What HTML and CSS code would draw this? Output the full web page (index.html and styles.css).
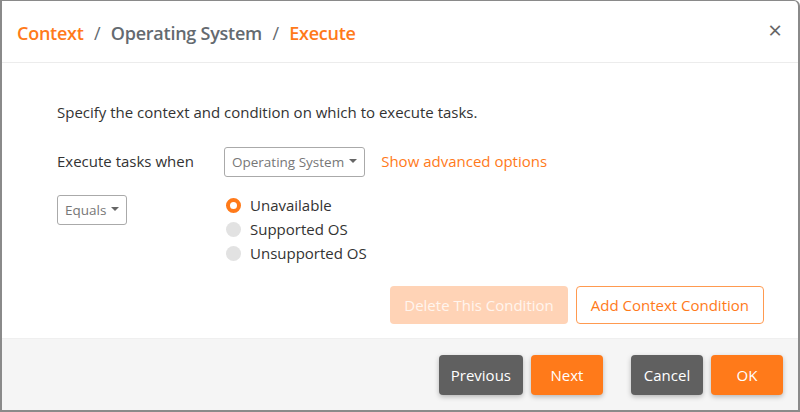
FILE: index.html
```html
<!DOCTYPE html>
<html lang="en">
<head>
    <meta charset="UTF-8">
    <title>Context / Operating System / Execute</title>
    <link rel="stylesheet" href="styles.css">
</head>
<body>
    <div class="modal">
        <div class="modal-header">
            <h2 class="crumbs">
                <span class="crumb-link">Context</span>
                <span class="sep">/</span>
                <span class="crumb-current">Operating System</span>
                <span class="sep">/</span>
                <span class="crumb-link">Execute</span>
            </h2>
            <span class="close">&times;</span>
        </div>

        <div class="modal-body">
            <p class="intro">Specify the context and condition on which to execute tasks.</p>

            <div class="row">
                <label class="row-label">Execute tasks when</label>
                <button class="dropdown">Operating System <span class="caret"></span></button>
                <a class="advanced" href="#">Show advanced options</a>
            </div>

            <div class="row cond-row">
                <div class="cond-left">
                    <button class="dropdown">Equals <span class="caret"></span></button>
                </div>
                <div class="radios">
                    <label class="radio checked"><span class="dot"></span>Unavailable</label>
                    <label class="radio"><span class="dot"></span>Supported OS</label>
                    <label class="radio"><span class="dot"></span>Unsupported OS</label>
                </div>
            </div>

            <div class="cond-actions">
                <button class="btn btn-disabled">Delete This Condition</button>
                <button class="btn btn-outline">Add Context Condition</button>
            </div>
        </div>

        <div class="modal-footer">
            <div class="group">
                <button class="btn btn-dark">Previous</button>
                <button class="btn btn-orange">Next</button>
            </div>
            <div class="group">
                <button class="btn btn-dark">Cancel</button>
                <button class="btn btn-orange">OK</button>
            </div>
        </div>
    </div>
</body>
</html>
```

FILE: styles.css
```css
body {
    margin: 0;
    font-family: "Open Sans", "Noto Sans", sans-serif;
    background: #ffffff;
}

.modal {
    width: 800px;
    height: 412px;
    box-sizing: border-box;
    border: 2px solid #8a8a8a;
    border-top-width: 1px;
    border-radius: 0 6px 0 0;
    display: flex;
    flex-direction: column;
    overflow: hidden;
}

.modal-header {
    height: 61px;
    border-bottom: 1px solid #ececec;
    display: flex;
    align-items: center;
    justify-content: space-between;
    padding: 0 16px 0 15px;
}

.crumbs {
    margin: 2px 0 0;
    font-size: 18px;
    font-weight: 600;
    color: #646a70;
    letter-spacing: -0.25px;
}

.crumb-link {
    color: #ff7a1a;
}

.sep {
    margin: 0 6px;
    font-weight: 400;
}

.close {
    font-size: 24px;
    color: #666;
    line-height: 1;
    margin-top: -3px;
}

.modal-body {
    flex: 1;
    padding: 39px 34px 0 55px;
    color: #333;
    font-size: 15px;
}

.intro {
    margin: 0 0 25px;
}

.row {
    display: flex;
    align-items: center;
}

.row-label {
    width: 167px;
    margin-top: -3px;
}

.dropdown {
    font-family: inherit;
    font-size: 13.5px;
    color: #777;
    background: #fff;
    border: 1px solid #aaa;
    border-radius: 3px;
    height: 30px;
    padding: 0 7px;
    display: flex;
    align-items: center;
    gap: 5px;
}

.caret {
    border-top: 4px solid #666;
    border-left: 4px solid transparent;
    border-right: 4px solid transparent;
    margin-top: -2px;
}

.advanced {
    margin-left: 16px;
    margin-top: -3px;
    color: #ff7a1a;
    text-decoration: none;
}

.cond-row {
    align-items: flex-start;
    margin-top: 18px;
}

.cond-left {
    width: 169px;
}

.radios {
    display: flex;
    flex-direction: column;
    margin-top: -2px;
}

.radio {
    display: flex;
    align-items: center;
    height: 24px;
}

.dot {
    width: 15px;
    height: 15px;
    border-radius: 50%;
    background: #e2e2e2;
    margin-right: 9px;
    box-sizing: border-box;
}

.radio.checked .dot {
    background: #fff;
    border: 4px solid #ff7a1a;
}

.cond-actions {
    display: flex;
    justify-content: flex-end;
    gap: 8px;
    margin-top: 21px;
}

.btn {
    font-family: inherit;
    font-size: 15px;
    border-radius: 4px;
    border: none;
    height: 38px;
    padding: 0 12px;
}

.btn-disabled {
    background: #ffd3b6;
    color: #fff5ee;
    padding: 0 14px;
}

.btn-outline {
    background: #fff;
    color: #ff7a1a;
    border: 1px solid #ff9a50;
    padding: 0 14px;
}

.modal-footer {
    height: 71px;
    background: #f5f5f5;
    border-top: 1px solid #efefef;
    display: flex;
    justify-content: flex-end;
    align-items: center;
    gap: 28px;
    padding: 0 15px 0 0;
}

.group {
    display: flex;
    gap: 8px;
}

.btn-dark,
.btn-orange {
    height: 40px;
    min-width: 72px;
    color: #fff;
    box-shadow: 0 2px 5px rgba(0, 0, 0, 0.25);
}

.btn-dark {
    background: #606060;
}

.btn-orange {
    background: #ff7a1a;
}
```
